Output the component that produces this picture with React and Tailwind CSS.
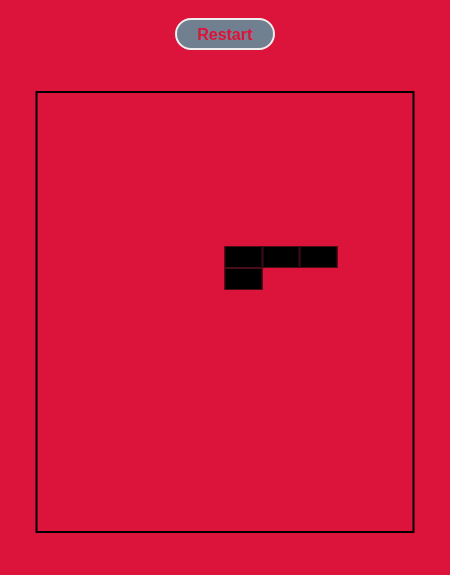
const ROWS = 20;
const COLS = 10;
const filled = new Set(["7-5", "7-6", "7-7", "8-5"]);

export default function App() {
  const cells = [];
  for (let r = 0; r < ROWS; r++) {
    for (let c = 0; c < COLS; c++) {
      const on = filled.has(`${r}-${c}`);
      cells.push(
        <div
          key={`${r}-${c}`}
          className={on ? "bg-black border border-[#4a0d1a]" : ""}
        />
      );
    }
  }

  return (
    <div
      className="min-h-screen w-full bg-[#dc143c] flex flex-col items-center pt-[18px]"
      style={{ fontFamily: '"Liberation Sans", Arial, sans-serif' }}
    >
      <button className="w-[100px] h-[32px] rounded-full bg-[#708090] border-2 border-[#eeeeee] text-[#dc143c] font-bold text-[16px] leading-none pt-[2px]">
        Restart
      </button>
      <div className="mt-[41px] w-[379px] h-[442px] border-2 border-black grid grid-cols-10 grid-rows-20 -translate-x-[0.5px]">
        {cells}
      </div>
    </div>
  );
}
